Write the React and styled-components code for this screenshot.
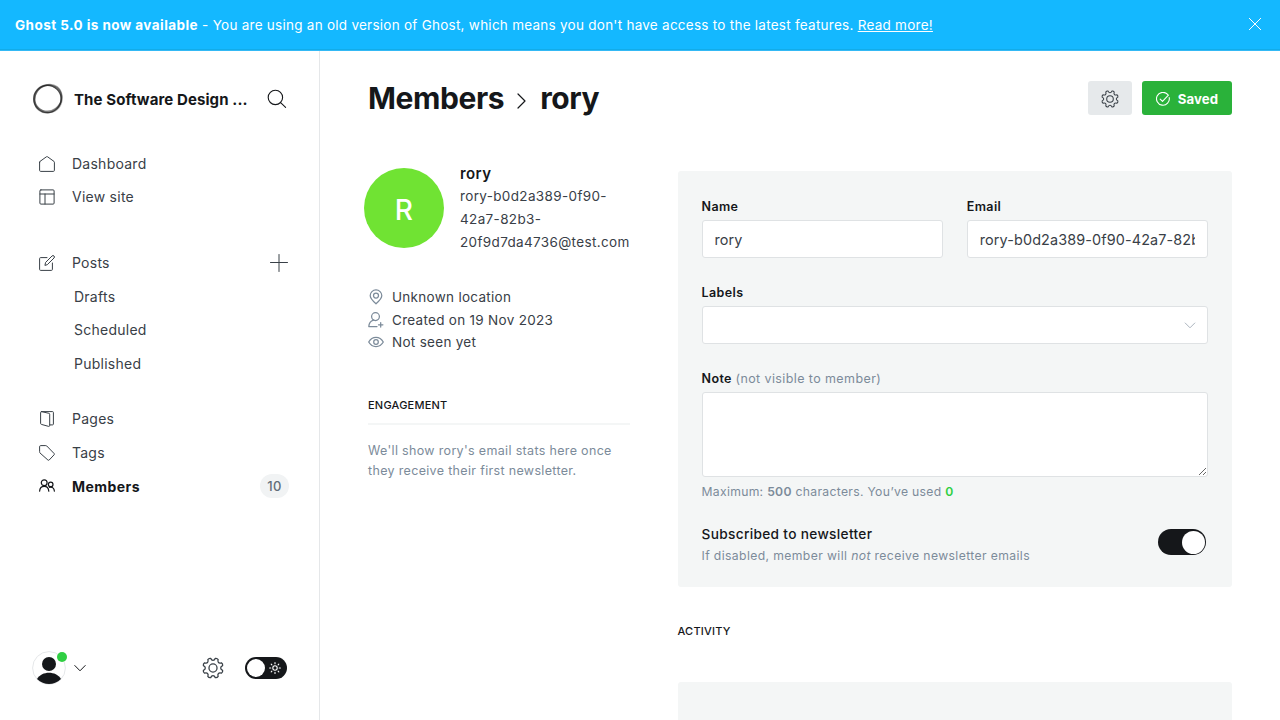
import React from "react";
import styled, { createGlobalStyle, css } from "styled-components";

const Global = createGlobalStyle`
  *, *::before, *::after { box-sizing: border-box; }
  html, body { margin: 0; padding: 0; height: 720px; overflow: hidden; background: #fff; }
  body {
    font-family: Inter, "Liberation Sans", sans-serif;
    font-size: 14px;
    letter-spacing: 0.2px;
    color: #15171a;
    -webkit-font-smoothing: antialiased;
  }
  h1, h2, h4, p { margin: 0; }
  svg { display: block; flex: none; }
`;

const Page = styled.div`
  width: 1280px;
  height: 720px;
  overflow: hidden;
  display: flex;
  flex-direction: column;
`;

const Banner = styled.header`
  flex: none;
  height: 51px;
  padding: 0 18px 1px 15px;
  display: flex;
  align-items: center;
  justify-content: space-between;
  background: #14b8ff;
  border-bottom: 1px solid #34b9f5;
  box-shadow: inset 0 -1px 0 #12ace9;
  color: #fff;
  font-size: 13.5px;
  line-height: 20px;
  letter-spacing: 0.258px;
  b { letter-spacing: 0.44px; }
  a { color: inherit; text-decoration: underline; }
  svg { margin-bottom: 2px; }
`;

const Body = styled.div`
  flex: 1;
  min-height: 0;
  display: flex;
`;

const Sidebar = styled.aside`
  width: 320px;
  flex: none;
  border-right: 1px solid #e5e7e9;
  display: flex;
  flex-direction: column;
  padding: 32px 32px 35px 32px;
`;

const SiteHead = styled.div`
  height: 32px;
  display: flex;
  align-items: center;
`;

const SiteName = styled.div`
  margin-left: 10px;
  width: 184px;
  font-size: 15px;
  font-weight: 700;
  line-height: 20px;
  letter-spacing: 0.1px;
  white-space: nowrap;
  padding-top: 1px;
`;

const SearchButton = styled.span`
  margin-left: 9px;
`;

const Nav = styled.nav`
  margin: 32px -1px 0 0;
  display: flex;
  flex-direction: column;
`;

const NavGroup = styled.div`
  display: grid;
  grid-auto-rows: ${(p) => p.$row}px;
  margin-bottom: ${(p) => p.$gap}px;
`;

const NavItem = styled.div`
  display: flex;
  align-items: center;
  padding-left: ${(p) => (p.$sub ? 42 : 7)}px;
  font-size: 14px;
  letter-spacing: 0.25px;
  color: #394047;
  ${(p) =>
    p.$active &&
    css`
      font-weight: 700;
      letter-spacing: 0.45px;
      color: #15171a;
    `}
  svg { margin-right: 17px; }
`;

const NavLabel = styled.span`
  flex: 1;
`;

const AddIcon = styled.span`
  svg { margin-right: 0; }
`;

const Count = styled.span`
  height: 24px;
  min-width: 29px;
  margin-right: -1px;
  border-radius: 12px;
  background: #f1f3f4;
  color: #626d79;
  font-size: 13px;
  font-weight: 500;
  display: flex;
  align-items: center;
  justify-content: center;
`;

const SideFoot = styled.div`
  margin-top: auto;
  height: 34px;
  display: flex;
  align-items: center;
  gap: 8px;
`;

const UserAvatar = styled.div`
  position: relative;
  width: 34px;
  height: 34px;
`;

const OnlineDot = styled.i`
  position: absolute;
  top: 1px;
  right: -1px;
  width: 10px;
  height: 10px;
  border-radius: 50%;
  background: #30cf43;
`;

const FootActions = styled.div`
  margin-left: auto;
  display: flex;
  align-items: center;
  gap: 21px;
  color: #394047;
`;

const ThemeSwitch = styled.div`
  width: 42px;
  height: 22px;
  border-radius: 11px;
  background: #15171a;
  padding: 0 6px 0 2px;
  display: flex;
  align-items: center;
  justify-content: space-between;
`;

const Knob = styled.i`
  width: ${(p) => p.$size}px;
  height: ${(p) => p.$size}px;
  border-radius: 50%;
  background: #fff;
`;

const Main = styled.main`
  flex: 1;
  min-width: 0;
  padding: 30px 48px 0;
  display: flex;
  flex-direction: column;
`;

const TitleBar = styled.div`
  height: 35px;
  display: flex;
  align-items: center;
  justify-content: space-between;
`;

const Title = styled.h1`
  display: flex;
  align-items: center;
  margin-top: -2px;
  font-size: 30px;
  line-height: 36px;
  font-weight: 700;
  letter-spacing: -0.4px;
  svg { margin: 6px 14px 0 13px; }
`;

const Actions = styled.div`
  display: flex;
  gap: 10px;
  margin-top: -1px;
`;

const Button = styled.button`
  border: 0;
  height: 34px;
  width: ${(p) => (p.$primary ? 90 : 44)}px;
  padding: 1px 0 0;
  border-radius: 3px;
  display: flex;
  align-items: center;
  justify-content: center;
  gap: 8px;
  font: 700 13.2px Inter, sans-serif;
  letter-spacing: 0.1px;
  background: ${(p) => (p.$primary ? "#2ab23a" : "#e6e9eb")};
  color: ${(p) => (p.$primary ? "#fff" : "#394047")};
`;

const Columns = styled.div`
  flex: 1;
  min-height: 0;
  display: flex;
  justify-content: space-between;
`;

const Profile = styled.section`
  width: 262px;
  padding-top: 52px;
`;

const Identity = styled.div`
  display: flex;
  margin-left: -4px;
`;

const Avatar = styled.div`
  width: 80px;
  height: 80px;
  flex: none;
  border-radius: 50%;
  background: #70e333;
  color: #fff;
  font-size: 28px;
  font-weight: 500;
  display: flex;
  align-items: center;
  justify-content: center;
  padding-top: 3px;
  margin-right: 16px;
`;

const Who = styled.div`
  margin-top: -6px;
  white-space: nowrap;
  h4 { font-size: 15px; line-height: 23px; font-weight: 600; letter-spacing: 0.4px; }
  p { color: #394047; font-size: 13.5px; line-height: 23px; letter-spacing: 0.35px; }
`;

const Facts = styled.div`
  margin-top: 32px;
`;

const Fact = styled.div`
  height: 22.5px;
  display: flex;
  align-items: center;
  gap: 8px;
  color: #394047;
  font-size: 13.5px;
  letter-spacing: 0.29px;
  svg { color: #7c8b9a; }
`;

const SectionLabel = styled.h4`
  font-size: 11px;
  line-height: 16px;
  font-weight: 500;
  letter-spacing: 0.22px;
  text-transform: uppercase;
`;

const EngagementLabel = styled(SectionLabel)`
  margin-top: 43.6px;
  padding-bottom: 10px;
  border-bottom: 2px solid #f4f6f6;
`;

const EmptyText = styled.p`
  margin-top: 16px;
  font-size: 12.5px;
  line-height: 20px;
  letter-spacing: 0.33px;
  color: #7c8b9a;
  white-space: nowrap;
`;

const Details = styled.section`
  width: 554.5px;
  padding-top: 55px;
`;

const Panel = styled.div`
  background: #f4f6f6;
  border-radius: 3px;
  padding: 26px 24px 0;
  height: 416px;
`;

const FieldRow = styled.div`
  display: grid;
  grid-template-columns: 1fr 1fr;
  gap: 24px;
`;

const Field = styled.div`
  min-width: 0;
  margin-bottom: ${(p) => p.$gap || 0}px;
`;

const Label = styled.label`
  display: block;
  height: 23.4px;
  font-size: 12.5px;
  line-height: 20px;
  font-weight: 600;
  letter-spacing: 0.4px;
  span { font-weight: 400; color: #7c8b9a; letter-spacing: 0.4px; }
`;

const box = css`
  display: block;
  width: 100%;
  background: #fff;
  border: 1px solid #dfe2e4;
  border-radius: 3px;
`;

const Input = styled.input`
  ${box}
  height: 38px;
  padding: 0 12px;
  outline: 0;
  font: 400 14.4px Inter, sans-serif;
  letter-spacing: 0.13px;
  color: #394047;
`;

const Select = styled.div`
  ${box}
  height: 38px;
  padding: 0 11px;
  display: flex;
  align-items: center;
  justify-content: flex-end;
`;

const TextArea = styled.textarea`
  ${box}
  height: 85px;
  resize: vertical;
`;

const Hint = styled.p`
  font-size: 12.2px;
  line-height: 20px;
  letter-spacing: ${(p) => (p.$under ? 0.3 : 0.38)}px;
  margin-top: ${(p) => (p.$under ? 5 : 0)}px;
  color: #7c8b9a;
  b { font-weight: 600; }
`;

const Used = styled.b`
  color: #30cf43;
`;

const Subscribe = styled.div`
  margin-top: 22px;
  display: flex;
  justify-content: space-between;
  padding-right: 2px;
  h4 { font-size: 13.7px; line-height: 20px; margin-bottom: 2px; font-weight: 500; letter-spacing: 0.32px; }
`;

const Toggle = styled.div`
  margin-top: 5px;
  width: 48px;
  height: 26px;
  border-radius: 13px;
  background: #15171a;
  padding-right: 1px;
  display: flex;
  align-items: center;
  justify-content: flex-end;
`;

const ActivityLabel = styled(SectionLabel)`
  margin: 36px 0 43px;
`;

const Icon = ({ size = 16, box: vb = 16, sw = 1, children, ...rest }) => (
  <svg
    width={size}
    height={size}
    viewBox={`0 0 ${vb} ${vb}`}
    fill="none"
    stroke="currentColor"
    strokeWidth={sw}
    strokeLinecap="round"
    strokeLinejoin="round"
    {...rest}
  >
    {children}
  </svg>
);

const gearPath = (() => {
  const at = (r, deg) => {
    const a = (deg * Math.PI) / 180;
    return `${(12 + r * Math.cos(a)).toFixed(2)} ${(12 + r * Math.sin(a)).toFixed(2)}`;
  };
  let d = "";
  for (let i = 0; i < 8; i++) {
    const c = 22.5 + i * 45;
    d += `${i ? "L" : "M"}${at(10.8, c - 9)}Q${at(11.8, c)} ${at(10.8, c + 9)}`;
    d += `C${at(7.8, c + 13)} ${at(7.8, c + 32)} ${at(10.8, c + 36)}`;
  }
  return d + "Z";
})();

const Gear = ({ size, sw }) => (
  <Icon size={size} box={24} sw={sw}>
    <path d={gearPath} />
    <circle cx="12" cy="12" r="4.4" />
  </Icon>
);

const SiteLogo = () => (
  <svg width="32" height="32" viewBox="0 0 32 32" fill="none" stroke="#222">
    <ellipse cx="15.4" cy="16" rx="13.7" ry="13.6" strokeWidth="1.3" opacity=".75" />
    <ellipse cx="16.6" cy="15.4" rx="13.8" ry="12.8" strokeWidth="1.4" opacity=".5" transform="rotate(-35 16 16)" />
    <ellipse cx="16.4" cy="15.8" rx="14.8" ry="13" strokeWidth="1.5" opacity=".4" transform="rotate(-52 16 16)" />
    <ellipse cx="15.8" cy="15.8" rx="14" ry="13.4" strokeWidth="1.6" opacity=".35" transform="rotate(40 16 16)" />
  </svg>
);

const App = () => (
  <Page>
    <Global />
    <Banner>
      <span>
        <b>Ghost 5.0 is now available</b> - You are using an old version of Ghost, which means you don't have access to the latest features. <a>Read more!</a>
      </span>
      <Icon size={14} box={14} sw={1}>
        <path d="M1.3 1.3l11.4 11.4M12.7 1.3L1.3 12.7" />
      </Icon>
    </Banner>
    <Body>
      <Sidebar>
        <SiteHead>
          <SiteLogo />
          <SiteName>The Software Design ...</SiteName>
          <SearchButton>
            <Icon size={20} box={20} sw={1.1}>
              <circle cx="8.4" cy="8.4" r="7.2" />
              <path d="M13.6 13.6l5 4.8" />
            </Icon>
          </SearchButton>
        </SiteHead>
        <Nav>
          <NavGroup $row={33} $gap={32.75}>
            <NavItem>
              <Icon>
                <path d="M.6 6.2v8.2c0 .6.4 1 1 1h12.8c.6 0 1-.4 1-1V6.2c0-.3-.1-.5-.3-.7L8.6.8a1 1 0 0 0-1.2 0L.9 5.5c-.2.2-.3.4-.3.7z" />
              </Icon>
              <NavLabel>Dashboard</NavLabel>
            </NavItem>
            <NavItem>
              <Icon>
                <rect x=".9" y=".9" width="14.2" height="14.2" rx="1" />
                <path d="M1 5h14M6 5v10" />
              </Icon>
              <NavLabel>View site</NavLabel>
            </NavItem>
          </NavGroup>
          <NavGroup $row={33.5} $gap={22.45}>
            <NavItem>
              <Icon>
                <path d="M8 2.6H1.6a1 1 0 0 0-1 1v10.8a1 1 0 0 0 1 1h10.8a1 1 0 0 0 1-1V8" />
                <path d="M6 10l.6-2.6L13 1a1.3 1.3 0 0 1 2 2L8.6 9.4z" />
              </Icon>
              <NavLabel>Posts</NavLabel>
              <AddIcon>
                <Icon size={18} box={18}>
                  <path d="M9 .5v17M.5 8.500h17" />
                </Icon>
              </AddIcon>
            </NavItem>
            <NavItem $sub>Drafts</NavItem>
            <NavItem $sub>Scheduled</NavItem>
            <NavItem $sub>Published</NavItem>
          </NavGroup>
          <NavGroup $row={33.6} $gap={0}>
            <NavItem>
              <Icon>
                <path d="M2.4.6h11.2c.4 0 .8.3.8.8v11.7c0 .5-.4.8-.8.8h-2.9" />
                <path d="M2.4.6l7.500 1.700c.5.1.8.4.8.9v11.400c0 .6-.5.9-1 .8l-7.300-2c-.5-.1-.8-.5-.8-1V1.400c0-.5.3-.8.8-.8z" />
              </Icon>
              <NavLabel>Pages</NavLabel>
            </NavItem>
            <NavItem>
              <Icon>
                <path d="M.6 1.500c0-.5.4-.9.9-.9h5.300c.4 0 .7.1.9.3l7.400 7.600c.4.4.4.9 0 1.300l-4.900 5.200c-.4.4-.9.4-1.300 0L.9 7.900c-.2-.3-.3-.6-.3-.9z" />
              </Icon>
              <NavLabel>Tags</NavLabel>
            </NavItem>
            <NavItem $active>
              <Icon sw={1.2}>
                <circle cx="5.200" cy="4.800" r="2.900" />
                <path d="M.6 13.200c.2-3 2-4.800 4.600-4.800s4.400 1.800 4.600 4.800" />
                <circle cx="11.700" cy="6.400" r="2.300" />
                <path d="M10.600 9.300c2.700-.7 4.600 1 4.800 3.900" />
              </Icon>
              <NavLabel>Members</NavLabel>
              <Count>10</Count>
            </NavItem>
          </NavGroup>
        </Nav>
        <SideFoot>
          <UserAvatar>
            <svg width="34" height="34" viewBox="0 0 34 34">
              <circle cx="17" cy="17" r="16.4" fill="#fff" stroke="#e5e7e9" strokeWidth="1" />
              <circle cx="17" cy="13" r="7" fill="#15171a" />
              <path d="M5 28C10 19.800 24 19.800 29 28C22 34.600 12 34.600 5 28z" fill="#15171a" />
            </svg>
            <OnlineDot />
          </UserAvatar>
          <Icon size={12} box={12}>
            <path d="M.8 3.500L6 8.800l5.200-5.300" />
          </Icon>
          <FootActions>
            <Gear size={22} sw={1.4} />
            <ThemeSwitch>
              <Knob $size={18} />
              <Icon size={12} box={12} sw={1.1} color="#fff">
                <circle cx="6" cy="6" r="2.200" />
                <path d="M6 .6v1.200M6 10.200v1.200M.6 6h1.200M10.200 6h1.200M2.200 2.200l.7.7M9.100 9.100l.7.7M2.200 9.800l.7-.7M9.100 2.900l.7-.7" />
              </Icon>
            </ThemeSwitch>
          </FootActions>
        </SideFoot>
      </Sidebar>
      <Main>
        <TitleBar>
          <Title>
            Members
            <svg width="9" height="16" viewBox="0 0 9 16" fill="none" stroke="currentColor" strokeWidth="1.2" strokeLinecap="round" strokeLinejoin="round">
              <path d="M1 1l7 7-7 7" />
            </svg>
            rory
          </Title>
          <Actions>
            <Button>
              <Gear size={18} sw={1.4} />
            </Button>
            <Button $primary>
              <Icon size={14} box={14} sw={1.1}>
                <path d="M4.200 7.200l2.300 2.200 5.900-6.200M11.600 2.400A6.400 6.400 0 1 0 13.200 5.500" />
              </Icon>
              Saved
            </Button>
          </Actions>
        </TitleBar>
        <Columns>
          <Profile>
            <Identity>
              <Avatar>R</Avatar>
              <Who>
                <h4>rory</h4>
                <p>rory-b0d2a389-0f90-<br />42a7-82b3-<br />20f9d7da4736@test.com</p>
              </Who>
            </Identity>
            <Facts>
              <Fact>
                <Icon sw={1.25}>
                  <path d="M8 14.800C4.700 12 2.200 9.300 2.200 6.600A5.700 5.700 0 0 1 8 1a5.700 5.700 0 0 1 5.800 5.600c0 2.700-2.500 5.400-5.800 8.200z" />
                  <circle cx="8" cy="6.600" r="2.500" />
                </Icon>
                Unknown location
              </Fact>
              <Fact>
                <Icon sw={1.25}>
                  <circle cx="7.500" cy="4.600" r="3.900" />
                  <path d="M5.500 8.200C2.600 9 1 11 .8 14.600h8.200M12.700 10.600v4.400M10.500 12.800h4.400" />
                </Icon>
                Created on 19 Nov 2023
              </Fact>
              <Fact>
                <Icon sw={1.25}>
                  <path d="M.7 8C2.300 5.200 4.800 3.400 8 3.400S13.700 5.200 15.300 8C13.700 10.800 11.200 12.600 8 12.600S2.300 10.800.7 8z" />
                  <circle cx="8" cy="8" r="2.300" />
                </Icon>
                Not seen yet
              </Fact>
            </Facts>
            <EngagementLabel>Engagement</EngagementLabel>
            <EmptyText>
              We'll show rory's email stats here once<br />they receive their first newsletter.
            </EmptyText>
          </Profile>
          <Details>
            <Panel>
              <FieldRow>
                <Field $gap={24.6}>
                  <Label>Name</Label>
                  <Input defaultValue="rory" />
                </Field>
                <Field $gap={24.6}>
                  <Label>Email</Label>
                  <Input defaultValue="rory-b0d2a389-0f90-42a7-82b3-20f9d7da4736@test.com" />
                </Field>
              </FieldRow>
              <Field $gap={24.6}>
                <Label>Labels</Label>
                <Select>
                  <Icon size={12} box={12} color="#abb4be">
                    <path d="M1.200 4L6 8.800l4.800-4.800" />
                  </Icon>
                </Select>
              </Field>
              <Field>
                <Label>Note <span>(not visible to member)</span></Label>
                <TextArea />
              </Field>
              <Hint $under>
                Maximum: <b>500</b> characters. You’ve used <Used>0</Used>
              </Hint>
              <Subscribe>
                <div>
                  <h4>Subscribed to newsletter</h4>
                  <Hint>If disabled, member will <i>not</i> receive newsletter emails</Hint>
                </div>
                <Toggle>
                  <Knob $size={23} />
                </Toggle>
              </Subscribe>
            </Panel>
            <ActivityLabel>Activity</ActivityLabel>
            <Panel />
          </Details>
        </Columns>
      </Main>
    </Body>
  </Page>
);

export default App;
